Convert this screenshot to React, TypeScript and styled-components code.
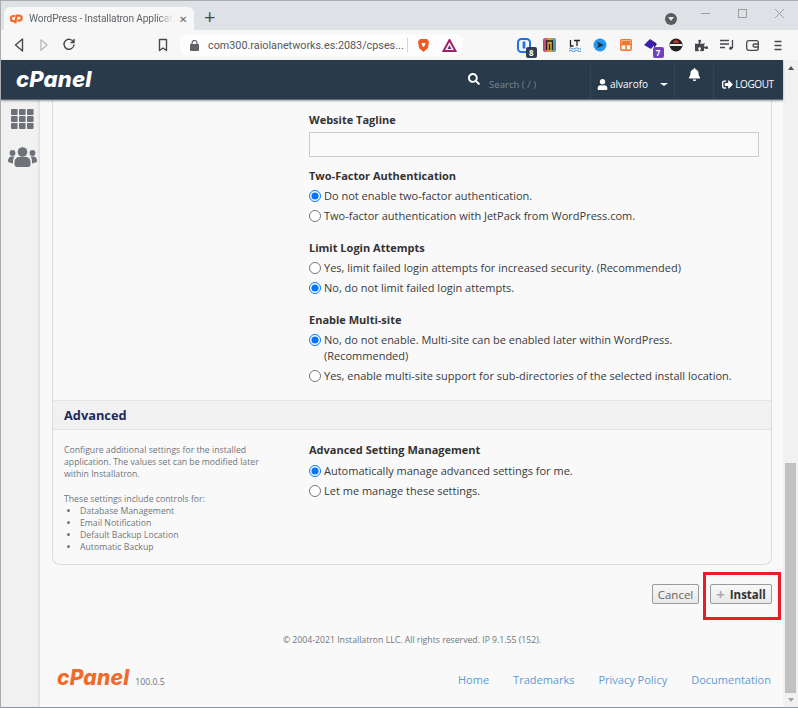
import styled, { createGlobalStyle } from "styled-components";
import { FaBell, FaPuzzlePiece, FaSearch, FaSignOutAlt, FaUser } from "react-icons/fa";

const GlobalStyle = createGlobalStyle`
  html, body { margin: 0; padding: 0; background: #f9f9f9; }
  * { box-sizing: border-box; }
  body { font-family: "Open Sans", sans-serif; }
`;

const Page = styled.div`
  position: relative;
  width: 798px;
  height: 708px;
  overflow: hidden;
  display: flex;
  flex-direction: column;
  border-top: 1px solid #a9abad;
  border-left: 1px solid #a9abad;
  border-bottom: 1px solid #8a97a8;
`;

/* browser chrome */
const TabStrip = styled.div`
  height: 29px;
  flex: none;
  background: #dee1e6;
  display: flex;
  align-items: flex-end;
  padding-left: 3px;
`;

const Tab = styled.div`
  width: 190px;
  height: 23px;
  background: #f7f7f7;
  border-radius: 6px 6px 0 0;
  display: flex;
  align-items: center;
  padding: 0 6px;
  color: #5f6368;
`;

const TabTitle = styled.span`
  margin-left: 6px;
  width: 144px;
  white-space: nowrap;
  overflow: hidden;
  font-family: "Roboto", sans-serif;
  font-size: 10.2px;
  letter-spacing: -0.15px;
  mask-image: linear-gradient(to right, #000 90%, transparent);
`;

const TabClose = styled.span`
  margin-left: 6px;
  font-size: 10px;
  line-height: 1;
  color: #5f6368;
`;

const NewTab = styled.span`
  margin: 0 0 3px 10px;
  font-size: 20px;
  line-height: 20px;
  color: #45484c;
`;

const WindowControls = styled.div`
  margin-left: auto;
  display: flex;
  align-items: flex-start;
  align-self: flex-start;
  padding-top: 5px;
`;

const ProfileDot = styled.span`
  width: 12px;
  height: 12px;
  margin: 7px 10px 0 0;
  border-radius: 50%;
  background: #5a5c5e;
  display: flex;
  align-items: center;
  justify-content: center;
  &::after {
    content: "";
    border-left: 3.5px solid transparent;
    border-right: 3.5px solid transparent;
    border-top: 4px solid #e8e8e8;
  }
`;

const WinButton = styled.span`
  width: 37px;
  height: 14px;
  display: flex;
  align-items: center;
  justify-content: center;
`;

const Toolbar = styled.div`
  height: 30px;
  flex: none;
  background: #f7f7f7;
  display: flex;
  align-items: center;
`;

const NavButton = styled.span<{ $w: number; $ml?: number }>`
  width: ${(p) => p.$w}px;
  margin-left: ${(p) => p.$ml ?? 0}px;
  flex: none;
  display: flex;
  justify-content: center;
`;

const Omnibox = styled.div`
  width: 283px;
  height: 22px;
  margin-left: 8px;
  background: #fdfdfd;
  border-radius: 8px;
  display: flex;
  align-items: center;
  padding-left: 10px;
  font-family: "Roboto", sans-serif;
  font-size: 10.8px;
  color: #55585c;
  white-space: nowrap;
`;

const Url = styled.span`
  margin-left: 9px;
  width: 194px;
`;

const OmniDivider = styled.span`
  width: 1px;
  height: 14px;
  background: #d6d6d6;
  margin-left: 5px;
`;

const OmniIcon = styled.span<{ $ml: number }>`
  margin-left: ${(p) => p.$ml}px;
  display: flex;
  width: 18px;
  justify-content: center;
`;

const ExtRow = styled.div`
  display: flex;
  align-items: center;
  margin-left: 48.3px;
`;

const Ext = styled.span`
  position: relative;
  width: 25.4px;
  height: 20px;
  display: flex;
  align-items: center;
  justify-content: center;
`;

const ExtBadge = styled.span<{ $bg: string }>`
  position: absolute;
  right: 0;
  bottom: -3px;
  width: 11px;
  height: 11px;
  background: ${(p) => p.$bg};
  color: #fff;
  border-radius: 2px;
  font-size: 8px;
  font-weight: 700;
  line-height: 11px;
  text-align: center;
`;

/* cpanel page */
const Body = styled.div`
  flex: 1;
  display: flex;
  min-height: 0;
`;

const Main = styled.div`
  width: 782px;
  flex: none;
  display: flex;
  flex-direction: column;
  min-height: 0;
`;

const TopBar = styled.header`
  height: 40px;
  flex: none;
  background: #293a4a;
  box-shadow: 0 1px 2px rgba(0, 0, 0, 0.35);
  border-bottom: 1px solid #5b6875;
  display: flex;
  align-items: stretch;
  color: #fff;
  position: relative;
  z-index: 2;
`;

const Logo = styled.span<{ $orange?: boolean }>`
  font-family: "Inter", sans-serif;
  font-weight: 800;
  font-style: italic;
  font-size: ${(p) => (p.$orange ? 21 : 22)}px;
  line-height: 1;
  letter-spacing: 0.2px;
  color: ${(p) => (p.$orange ? "#f26a2a" : "#fff")};
`;

const TopLogo = styled.div`
  width: 460px;
  padding: 8px 0 0 15px;
`;

const SearchBox = styled.div`
  width: 129px;
  display: flex;
  align-items: flex-start;
  padding: 13px 0 0 7px;
  font-size: 9.6px;
  color: #7a8691;
`;

const SearchIcon = styled(FaSearch)`
  color: #fff;
`;

const SearchText = styled.span`
  margin: 5px 0 0 9px;
`;

const TopCell = styled.div<{ $w: number }>`
  width: ${(p) => p.$w}px;
  margin-top: 5px;
  height: 34px;
  padding-top: 4px;
  border-left: 1px solid #34475a;
  display: flex;
  align-items: center;
  justify-content: center;
  font-size: 10px;
  gap: 2px;
`;

const BellCell = styled(TopCell)`
  align-items: flex-start;
  padding-top: 3px;
`;

const LogoutCell = styled(TopCell)`
  letter-spacing: -0.4px;
`;

const Caret = styled.span`
  margin-left: 10px;
  border-left: 4px solid transparent;
  border-right: 4px solid transparent;
  border-top: 3.5px solid #fff;
`;

const Columns = styled.div`
  flex: 1;
  display: flex;
  min-height: 0;
  overflow: hidden;
`;

const Sidebar = styled.aside`
  width: 39px;
  flex: none;
  background: #f1f1f1;
  box-shadow: inset -3px 0 3px -2px #d8d8d8;
  display: flex;
  flex-direction: column;
  align-items: center;
  padding: 9px 0 0 4px;
  gap: 18px;
`;

const Content = styled.main`
  flex: 1;
  background: #f9f9f9;
  padding: 0 11px 0 12px;
  display: flex;
  flex-direction: column;
`;

const Panel = styled.section`
  height: 465px;
  flex: none;
  border: 1px solid #dcdce0;
  border-top: 0;
  border-radius: 0 0 8px 8px;
  display: flex;
  flex-direction: column;
`;

const UpperGrid = styled.div`
  height: 300px;
  flex: none;
  padding: 12px 0 0 256px;
`;

const Label = styled.div<{ $gap?: number }>`
  font-size: 11px;
  line-height: 16px;
  font-weight: 700;
  color: #333;
  margin-bottom: ${(p) => p.$gap ?? 2}px;
`;

const Group = styled.div<{ $gap?: number }>`
  margin-bottom: ${(p) => p.$gap ?? 14}px;
`;

const TaglineInput = styled.div`
  width: 450px;
  height: 25px;
  background: #fafafa;
  border: 1px solid #ccc;
  margin-top: 4px;
`;

const RadioRow = styled.label`
  display: flex;
  align-items: flex-start;
  font-size: 11px;
  line-height: 16px;
  color: #3a3a3a;
  padding: 2px 0;
`;

const Radio = styled.input.attrs({ type: "radio", readOnly: true })`
  width: 12px;
  height: 12px;
  margin: 2px 3px 0 0;
  flex: none;
`;

const AdvancedHead = styled.h2`
  height: 30px;
  margin: 0;
  flex: none;
  background: #f1f1f1;
  border-top: 1px solid #e4e4e4;
  border-bottom: 1px solid #e4e4e4;
  padding-left: 11px;
  font-size: 12.8px;
  line-height: 28px;
  font-weight: 700;
  color: #1d2a5c;
`;

const AdvancedBody = styled.div`
  display: flex;
  padding-top: 14px;
`;

const Help = styled.div`
  width: 256px;
  padding-left: 11px;
  font-size: 8.7px;
  line-height: 12.2px;
  color: #70757a;
`;

const HelpPara = styled.p`
  margin: 0 0 12px;
  width: 200px;
`;

const HelpLead = styled.p`
  margin: 0;
`;

const HelpList = styled.ul`
  margin: 0;
  padding-left: 16px;
`;

const AdvancedFields = styled.div`
  margin-top: -2px;
`;

const Actions = styled.div`
  display: flex;
  justify-content: flex-end;
  gap: 11px;
  margin-top: 19px;
`;

const Btn = styled.button<{ $primary?: boolean }>`
  height: 20px;
  padding: 0;
  width: ${(p) => (p.$primary ? 62 : 47)}px;
  border: 1px solid #9a9a9a;
  border-radius: 2px;
  background: linear-gradient(#f8f8f8, #e8e8e8);
  font-family: "Open Sans", sans-serif;
  font-size: 11.5px;
  font-weight: ${(p) => (p.$primary ? 700 : 400)};
  color: ${(p) => (p.$primary ? "#333" : "#666")};
  display: flex;
  align-items: center;
  justify-content: center;
`;

const Plus = styled.span`
  font-size: 15px;
  font-weight: 700;
  color: #aaa;
  margin-right: 5px;
  line-height: 1;
`;

const Copyright = styled.p`
  margin: 30px 0 0;
  text-align: center;
  font-size: 8.7px;
  line-height: 12px;
  color: #70757a;
`;

const Footer = styled.footer`
  display: flex;
  align-items: flex-end;
  margin-top: 21px;
  padding-left: 5px;
`;

const Version = styled.span`
  margin: 0 0 0 6px;
  font-size: 8.7px;
  line-height: 12px;
  color: #6c7278;
`;

const FooterLinks = styled.nav`
  margin: 0 1px 0 auto;
  display: flex;
  gap: 24px;
  font-size: 11px;
  line-height: 16px;
  color: #5d9bd6;
`;

const Scrollbar = styled.div`
  flex: 1;
  background: #f1f1f1;
  display: flex;
  flex-direction: column;
  align-items: center;
`;

const ScrollUp = styled.span`
  margin-top: 6px;
  border-left: 3.5px solid transparent;
  border-right: 3.5px solid transparent;
  border-bottom: 4px solid #505050;
`;

const ScrollThumb = styled.span`
  margin-top: auto;
  width: 11px;
  height: 230px;
  background: #c1c1c1;
`;

const ScrollDown = styled.span`
  margin: 5px 0;
  border-left: 3.5px solid transparent;
  border-right: 3.5px solid transparent;
  border-top: 4px solid #a3a3a3;
`;

const Highlight = styled.div`
  position: absolute;
  left: 702px;
  top: 571px;
  width: 78px;
  height: 48px;
  border: 3px solid #ed1c24;
  pointer-events: none;
`;

const BarIcon = ({ d, color = "#45484c" }: { d: string; color?: string }) => (
  <svg width="16" height="16" viewBox="0 0 16 16" fill="none" stroke={color} strokeWidth="1.4" strokeLinejoin="round" strokeLinecap="round">
    <path d={d} />
  </svg>
);

const CpanelFavicon = () => (
  <svg width="13" height="10" viewBox="0 0 13 10" fill="none" stroke="#f26a2a" strokeWidth="2.2">
    <path d="M5 2H3.4a2.6 2.6 0 0 0 0 5.2H5M5.2 9.4 6.6 1.6H9.2a2.5 2.5 0 0 1 0 5H7.4" />
  </svg>
);

const GridIcon = () => (
  <svg width="23" height="20" viewBox="0 0 23 20" fill="#6c7278">
    {[0, 8, 16].map((x) =>
      [0, 7, 14].map((y) => <rect key={`${x}-${y}`} x={x} y={y} width="6.6" height="6" rx="1" />)
    )}
  </svg>
);

const UsersIcon = () => (
  <svg width="29" height="20" viewBox="0 0 29 20" fill="#6c7278">
    <circle cx="14.5" cy="5" r="4.8" />
    <path d="M6.5 15c0-3 2.5-5 4.5-5h7c2 0 4.5 2 4.5 5v2.5c0 1.5-1 2.5-2.5 2.5H9c-1.5 0-2.5-1-2.5-2.5z" />
    <circle cx="4.5" cy="6" r="2.9" />
    <circle cx="24.5" cy="6" r="2.9" />
    <path d="M0 14c0-2.5 1.5-4.5 3.5-4.5h3c-1 1.5-1.5 3-1.5 5v2L1.5 15.5C.5 15.2 0 14.8 0 14z" />
    <path d="M29 14c0-2.5-1.5-4.5-3.5-4.5h-3c1 1.5 1.5 3 1.5 5v2l3.5-1C28.5 15.2 29 14.8 29 14z" />
  </svg>
);

const Extensions = () => (
  <ExtRow>
    <Ext>
      <svg width="14" height="15" viewBox="0 0 14 15"><rect x="1" y="1" width="12" height="13" rx="3.5" fill="none" stroke="#1a73e8" strokeWidth="2" /><rect x="5.6" y="3.5" width="2.8" height="7" fill="#1a73e8" /></svg>
      <ExtBadge $bg="#2f3f4f">8</ExtBadge>
    </Ext>
    <Ext>
      <svg width="13" height="14" viewBox="0 0 13 14"><defs><linearGradient id="rb" x1="0" x2="1"><stop offset="0" stopColor="#c2339a" /><stop offset="0.5" stopColor="#e2a227" /><stop offset="1" stopColor="#2f9ad0" /></linearGradient></defs><rect width="13" height="14" rx="2" fill="url(#rb)" /><path d="M3.5 12V3h6v9M6.5 12V6" fill="none" stroke="#222" strokeWidth="1.3" /></svg>
    </Ext>
    <Ext>
      <svg width="14" height="13" viewBox="0 0 14 13" fill="none"><path d="M2.5 1v6h3M6 1.5h6M9 1.5V7" stroke="#222" strokeWidth="1.3" /><path d="M1 9.5q1.5-1.5 3 0t3 0 3 0 3 0M1 12q1.5-1.5 3 0t3 0 3 0 3 0" stroke="#3a8fd8" strokeWidth="1" /></svg>
    </Ext>
    <Ext>
      <svg width="14" height="14" viewBox="0 0 14 14"><circle cx="7" cy="7" r="6.5" fill="#2196f3" /><path d="M4 3.8 11 7 4 10.2 5.5 7z" fill="#263238" /></svg>
    </Ext>
    <Ext>
      <svg width="12" height="12" viewBox="0 0 12 12" fill="none" stroke="#f4762c" strokeWidth="1.5"><rect x="0.8" y="0.8" width="10.4" height="10.4" rx="1" /><path d="M1 5.5h10M6 5.5V11" /><rect x="2" y="2" width="8" height="3" fill="#f4762c" stroke="none" /></svg>
    </Ext>
    <Ext>
      <svg width="16" height="15" viewBox="0 0 16 15"><path d="M7 1l6 4-5 6-7-4z" fill="#3f1fa8" /><path d="M11 4l3 2-3 4z" fill="#2a1580" /></svg>
      <ExtBadge $bg="#6f42c1">7</ExtBadge>
    </Ext>
    <Ext>
      <svg width="14" height="14" viewBox="0 0 14 14"><circle cx="7" cy="7" r="6.5" fill="#222" /><rect x="1" y="6" width="12" height="2" fill="#eee" /><path d="M4.2 5a2.8 2.8 0 0 1 5.6 0z" fill="#c0392b" /></svg>
    </Ext>
    <Ext><FaPuzzlePiece size={13} color="#45484c" /></Ext>
    <Ext>
      <svg width="14" height="12" viewBox="0 0 14 12" fill="none" stroke="#45484c" strokeWidth="1.3"><path d="M0 1.5h9M0 5h9M0 8.5h5M12.5 1v8" /><circle cx="10.8" cy="9.2" r="1.6" fill="#45484c" stroke="none" /></svg>
    </Ext>
    <Ext>
      <svg width="13" height="11" viewBox="0 0 13 11" fill="none" stroke="#45484c" strokeWidth="1.3"><rect x="0.7" y="0.7" width="11.6" height="9.6" rx="2" /><path d="M12 4H8.5a1.4 1.4 0 0 0 0 3H12" /></svg>
    </Ext>
    <Ext>
      <svg width="10" height="11" viewBox="0 0 10 11" stroke="#45484c" strokeWidth="1.5"><path d="M1.5 1.5h7M1.5 5.5h7M1.5 9.5h7" /></svg>
    </Ext>
  </ExtRow>
);

export default function App() {
  return (
    <Page>
      <GlobalStyle />
      <TabStrip>
        <Tab>
          <CpanelFavicon />
          <TabTitle>WordPress - Installatron Applicati</TabTitle>
          <TabClose>✕</TabClose>
        </Tab>
        <NewTab>+</NewTab>
        <WindowControls>
          <ProfileDot />
          <WinButton><svg width="9" height="1"><rect width="9" height="1" fill="#9a9c9e" /></svg></WinButton>
          <WinButton><svg width="9" height="9"><rect x="0.5" y="0.5" width="8" height="8" fill="none" stroke="#9a9c9e" /></svg></WinButton>
          <WinButton><svg width="9" height="9" stroke="#9a9c9e"><path d="M0 0l9 9M9 0L0 9" /></svg></WinButton>
        </WindowControls>
      </TabStrip>

      <Toolbar>
        <NavButton $w={36}><BarIcon d="M11.5 2 4.5 8l7 6z" /></NavButton>
        <NavButton $w={14}><BarIcon d="M4.5 2l7 6-7 6z" color="#b4b6b8" /></NavButton>
        <NavButton $w={36}><BarIcon d="M12.5 5A5 5 0 1 0 13 8M13 2.5V5.5H10" /></NavButton>
        <NavButton $w={18} $ml={67}><BarIcon d="M4.5 2.5h7v11L8 11l-3.5 2.5z" /></NavButton>
        <Omnibox>
          <svg width="9" height="11" viewBox="0 0 9 11"><rect y="4" width="9" height="7" rx="1" fill="#5f6368" /><path d="M2 4.5V3a2.5 2.5 0 0 1 5 0v1.5" fill="none" stroke="#5f6368" strokeWidth="1.2" /></svg>
          <Url>com300.raiolanetworks.es:2083/cpses...</Url>
          <OmniDivider />
          <OmniIcon $ml={6}>
            <svg width="13" height="15" viewBox="0 0 13 15"><path d="M3 1h7l2 2.5L11 10l-4.5 4L2 10 1 3.5z" fill="#f15a22" /><path d="M4.5 5h4l-1 3-1 1-1-1z" fill="#fff" /></svg>
          </OmniIcon>
          <OmniIcon $ml={8}>
            <svg width="15" height="13" viewBox="0 0 15 13" fill="none"><path d="M7.5 1 1.5 12h12z" stroke="#9e1f63" strokeWidth="2" /><path d="M7.5 6 5.5 10h4z" fill="#662d91" /></svg>
          </OmniIcon>
        </Omnibox>
        <Extensions />
      </Toolbar>

      <Body>
        <Main>
          <TopBar>
            <TopLogo><Logo>cPanel</Logo></TopLogo>
            <SearchBox>
              <SearchIcon size={12} />
              <SearchText>Search ( / )</SearchText>
            </SearchBox>
            <TopCell $w={84}><FaUser size={11} />alvarofo<Caret /></TopCell>
            <BellCell $w={39}><FaBell size={13} /></BellCell>
            <LogoutCell $w={69}><FaSignOutAlt size={11} />LOGOUT</LogoutCell>
          </TopBar>
          <Columns>
            <Sidebar>
              <GridIcon />
              <UsersIcon />
            </Sidebar>
            <Content>
              <Panel>
                <UpperGrid>
                  <Group $gap={11}>
                    <Label>Website Tagline</Label>
                    <TaglineInput />
                  </Group>
                  <Group>
                    <Label>Two-Factor Authentication</Label>
                    <RadioRow><Radio name="tfa" defaultChecked />Do not enable two-factor authentication.</RadioRow>
                    <RadioRow><Radio name="tfa" />Two-factor authentication with JetPack from WordPress.com.</RadioRow>
                  </Group>
                  <Group>
                    <Label>Limit Login Attempts</Label>
                    <RadioRow><Radio name="limit" />Yes, limit failed login attempts for increased security. (Recommended)</RadioRow>
                    <RadioRow><Radio name="limit" defaultChecked />No, do not limit failed login attempts.</RadioRow>
                  </Group>
                  <Group>
                    <Label>Enable Multi-site</Label>
                    <RadioRow><Radio name="multi" defaultChecked /><span>No, do not enable. Multi-site can be enabled later within WordPress.<br />(Recommended)</span></RadioRow>
                    <RadioRow><Radio name="multi" />Yes, enable multi-site support for sub-directories of the selected install location.</RadioRow>
                  </Group>
                </UpperGrid>
                <AdvancedHead>Advanced</AdvancedHead>
                <AdvancedBody>
                  <Help>
                    <HelpPara>Configure additional settings for the installed application. The values set can be modified later within Installatron.</HelpPara>
                    <HelpLead>These settings include controls for:</HelpLead>
                    <HelpList>
                      <li>Database Management</li>
                      <li>Email Notification</li>
                      <li>Default Backup Location</li>
                      <li>Automatic Backup</li>
                    </HelpList>
                  </Help>
                  <AdvancedFields>
                    <Label $gap={3}>Advanced Setting Management</Label>
                    <RadioRow><Radio name="adv" defaultChecked />Automatically manage advanced settings for me.</RadioRow>
                    <RadioRow><Radio name="adv" />Let me manage these settings.</RadioRow>
                  </AdvancedFields>
                </AdvancedBody>
              </Panel>
              <Actions>
                <Btn>Cancel</Btn>
                <Btn $primary><Plus>+</Plus>Install</Btn>
              </Actions>
              <Copyright>© 2004-2021 Installatron LLC. All rights reserved. IP 9.1.55 (152).</Copyright>
              <Footer>
                <Logo $orange>cPanel</Logo>
                <Version>100.0.5</Version>
                <FooterLinks>
                  <span>Home</span>
                  <span>Trademarks</span>
                  <span>Privacy Policy</span>
                  <span>Documentation</span>
                </FooterLinks>
              </Footer>
            </Content>
          </Columns>
        </Main>
        <Scrollbar>
          <ScrollUp />
          <ScrollThumb />
          <ScrollDown />
        </Scrollbar>
      </Body>
      <Highlight />
    </Page>
  );
}
